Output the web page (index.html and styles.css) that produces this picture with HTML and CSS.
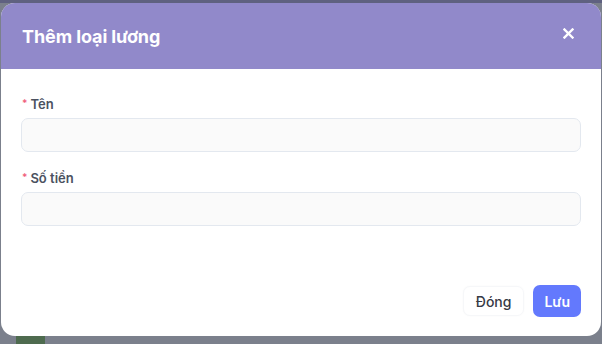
FILE: index.html
```html
<!DOCTYPE html>
<html lang="vi">
<head>
<meta charset="utf-8">
<link rel="stylesheet" href="styles.css">
</head>
<body>
<div class="backdrop">
  <div class="modal">
    <div class="modal-header">
      <h2 class="modal-title">Thêm loại lương</h2>
      <button class="close-btn" aria-label="Close">
        <svg width="11" height="11" viewBox="0 0 11 11"><path d="M1.5 1.5L9.5 9.5M9.5 1.5L1.5 9.5" stroke="#fff" stroke-width="2.4" stroke-linecap="square"/></svg>
      </button>
    </div>
    <div class="modal-body">
      <div class="field">
        <label class="label"><span class="req">*</span>Tên</label>
        <div class="input"></div>
      </div>
      <div class="field">
        <label class="label"><span class="req">*</span>Số tiền</label>
        <div class="input"></div>
      </div>
    </div>
    <div class="modal-footer">
      <button class="btn btn-default">Đóng</button>
      <button class="btn btn-primary">Lưu</button>
    </div>
  </div>
  <div class="under">
    <span class="under-block"></span>
  </div>
</div>
</body>
</html>
```
FILE: styles.css
```css
* { box-sizing: border-box; }
html, body { margin: 0; padding: 0; }
body {
  width: 602px;
  height: 344px;
  overflow: hidden;
  font-family: Inter, "Noto Sans", sans-serif;
  background: #7b808c;
}
.backdrop {
  height: 344px;
  padding-top: 3px;
  background: linear-gradient(to bottom, #5f6180 0, #5f6180 3px, #7b808c 3px);
  display: flex;
  flex-direction: column;
}
.modal {
  margin-left: 1px;
  width: 600px;
  height: 333px;
  background: #fff;
  border-radius: 14px;
  overflow: hidden;
  display: flex;
  flex-direction: column;
}
.modal-header {
  height: 66px;
  background: #9189ca;
  display: flex;
  align-items: center;
  justify-content: space-between;
  padding: 0 27px 0 21px;
}
.modal-title {
  margin: 0;
  color: #fff;
  font-size: 18px;
  font-weight: 700;
  letter-spacing: -0.1px;
}
.close-btn {
  border: 0;
  background: none;
  padding: 0;
  width: 11px;
  height: 11px;
  display: flex;
  margin-top: -5px;
}
.modal-body {
  padding: 26px 20px 0 20px;
  display: flex;
  flex-direction: column;
  gap: 17px;
}
.field {
  display: flex;
  flex-direction: column;
  gap: 6px;
}
.label {
  font-size: 13px;
  font-weight: 600;
  color: #4b5160;
  display: flex;
  align-items: center;
  height: 17px;
  padding-left: 1px;
}
.req {
  color: #f0607a;
  font-size: 10px;
  margin-right: 3px;
  margin-top: -1px;
}
.input {
  height: 34px;
  background: #fafafa;
  border: 1px solid #e3e8ef;
  border-radius: 7px;
}
.modal-footer {
  margin-top: auto;
  padding: 0 20px 19px 0;
  display: flex;
  justify-content: flex-end;
  align-items: flex-end;
  gap: 9px;
}
.btn {
  font-family: inherit;
  font-size: 14px;
  border-radius: 7px;
  height: 32px;
  cursor: pointer;
}
.btn-default {
  background: #fff;
  border: 1px solid #f6f7f9;
  box-shadow: 0 0 2px rgba(0, 0, 0, 0.03);
  color: #363a45;
  font-weight: 500;
  padding: 0 12px;
  height: 30px;
  margin-bottom: 1px;
}
.btn-primary {
  background: #6379fd;
  border: 0;
  color: #fff;
  font-weight: 600;
  padding: 0 11px;
}
.under {
  height: 8px;
  display: flex;
}
.under-block {
  display: block;
  margin-left: 16px;
  width: 29px;
  height: 8px;
  background: #4e6b4f;
}
```
